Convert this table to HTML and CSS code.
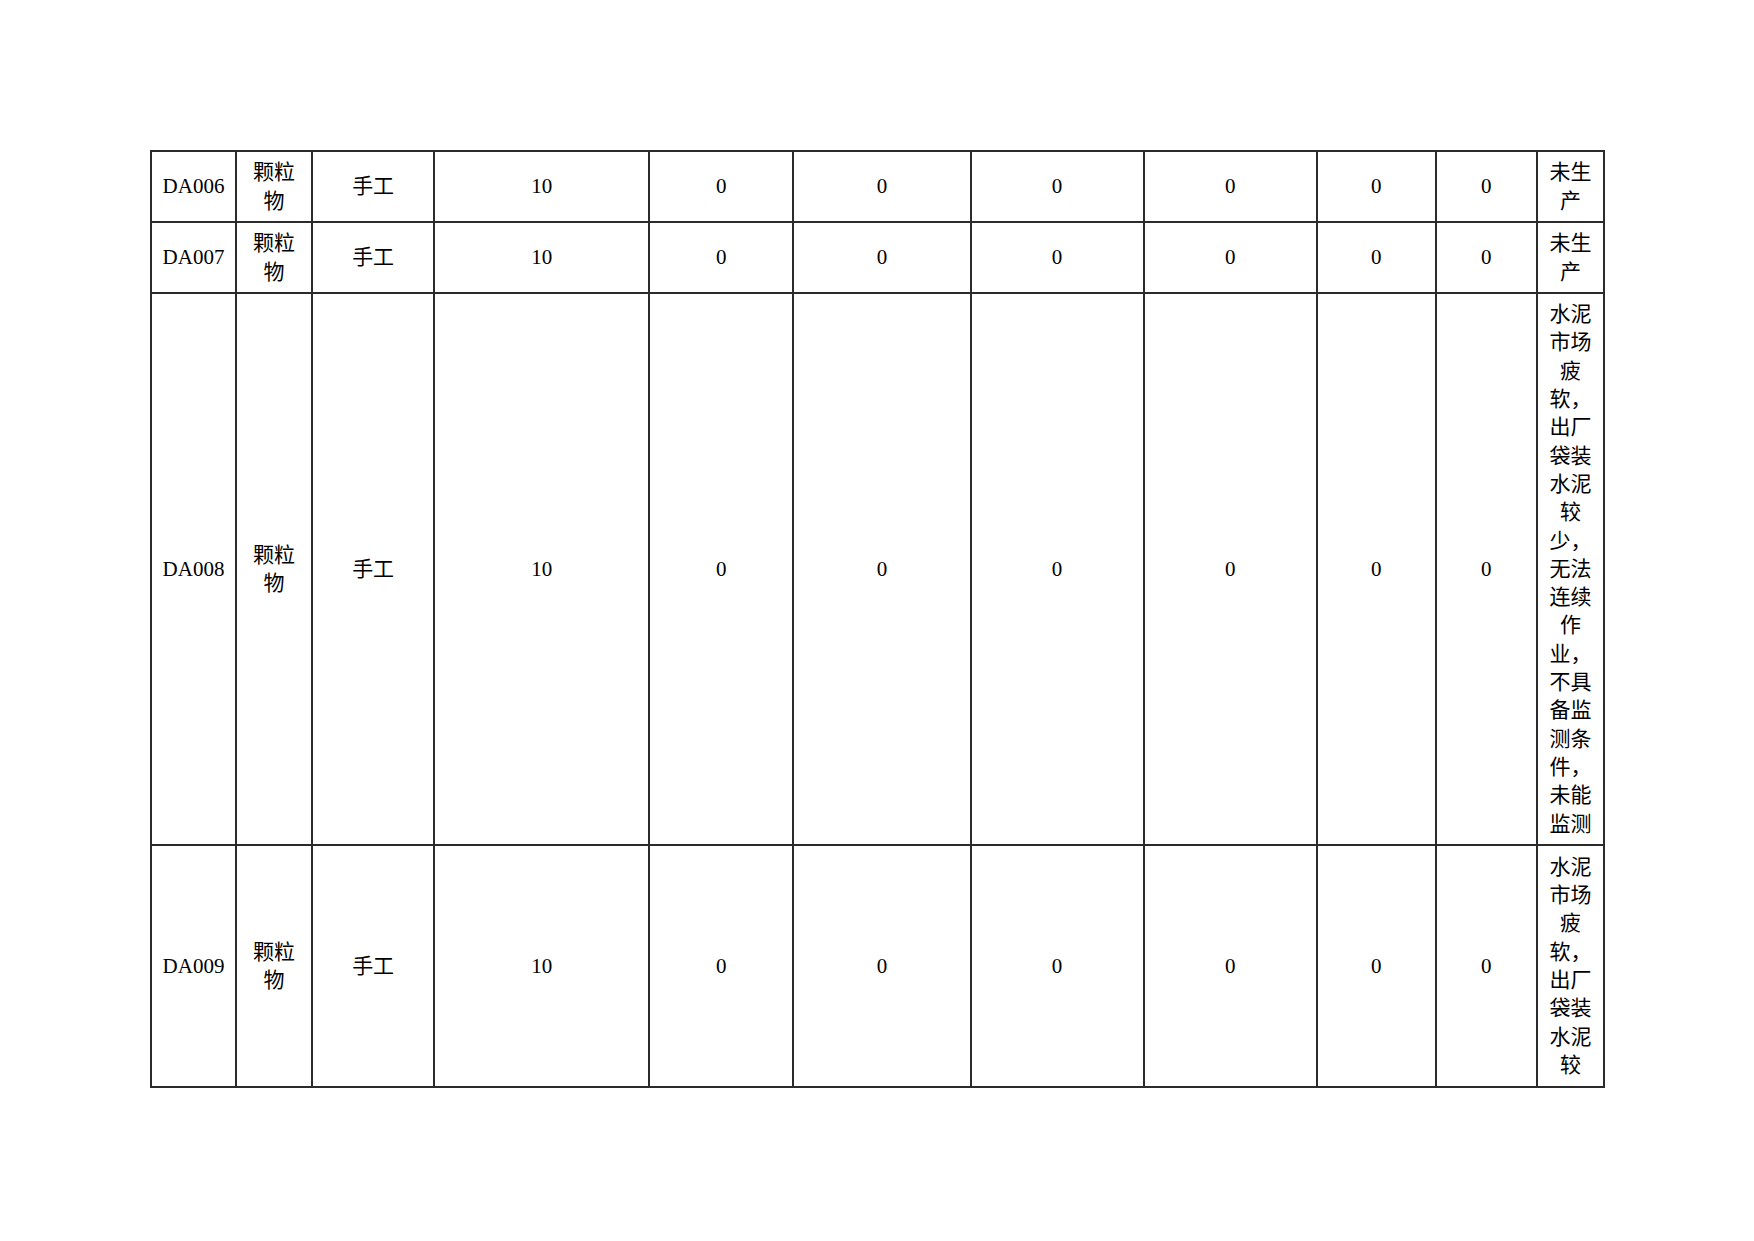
FILE: index.html
```html
<!DOCTYPE html>
<html lang="zh">
<head>
<meta charset="utf-8">
<title>监测表</title>
<link rel="stylesheet" href="styles.css">
</head>
<body>
<div class="page">
<table class="grid">
<colgroup>
<col class="c1"><col class="c2"><col class="c3"><col class="c4"><col class="c5"><col class="c6"><col class="c7"><col class="c8"><col class="c9"><col class="c10"><col class="c11">
</colgroup>
<tbody>
<tr class="r-short">
<td>DA006</td><td class="narrow">颗粒物</td><td>手工</td><td>10</td><td>0</td><td>0</td><td>0</td><td>0</td><td>0</td><td>0</td><td class="note">未生产</td>
</tr>
<tr class="r-short">
<td>DA007</td><td class="narrow">颗粒物</td><td>手工</td><td>10</td><td>0</td><td>0</td><td>0</td><td>0</td><td>0</td><td>0</td><td class="note">未生产</td>
</tr>
<tr class="r-tall">
<td>DA008</td><td class="narrow">颗粒物</td><td>手工</td><td>10</td><td>0</td><td>0</td><td>0</td><td>0</td><td>0</td><td>0</td><td class="note">水泥市场疲软，出厂袋装水泥较少，无法连续作业，不具备监测条件，未能监测</td>
</tr>
<tr class="r-mid">
<td>DA009</td><td class="narrow">颗粒物</td><td>手工</td><td>10</td><td>0</td><td>0</td><td>0</td><td>0</td><td>0</td><td>0</td><td class="note">水泥市场疲软，出厂袋装水泥较</td>
</tr>
</tbody>
</table>
</div>
</body>
</html>
```

FILE: styles.css
```css
html, body {
  margin: 0;
  padding: 0;
  background: #ffffff;
}

.page {
  padding: 150px 0 0 150px;
}

.grid {
  border-collapse: collapse;
  table-layout: fixed;
  width: 1455px;
  font-family: "Liberation Serif", "Noto Sans CJK SC", serif;
  font-size: 21px;
  line-height: 28.3px;
  color: #000000;
}

.c1 { width: 85px; }
.c2 { width: 76px; }
.c3 { width: 122px; }
.c4 { width: 215px; }
.c5 { width: 144px; }
.c6 { width: 177px; }
.c7 { width: 173px; }
.c8 { width: 173px; }
.c9 { width: 119px; }
.c10 { width: 101px; }
.c11 { width: 67px; }

.grid td {
  border: 2px solid #2b2b2b;
  text-align: center;
  vertical-align: middle;
  padding: 0 4px;
}

.grid td.narrow {
  padding: 0 14px;
}

.grid td.note {
  padding: 0 11px;
}

.r-short td { height: 69px; }
.r-tall td { height: 550px; }
.r-mid td { height: 240px; }
```
